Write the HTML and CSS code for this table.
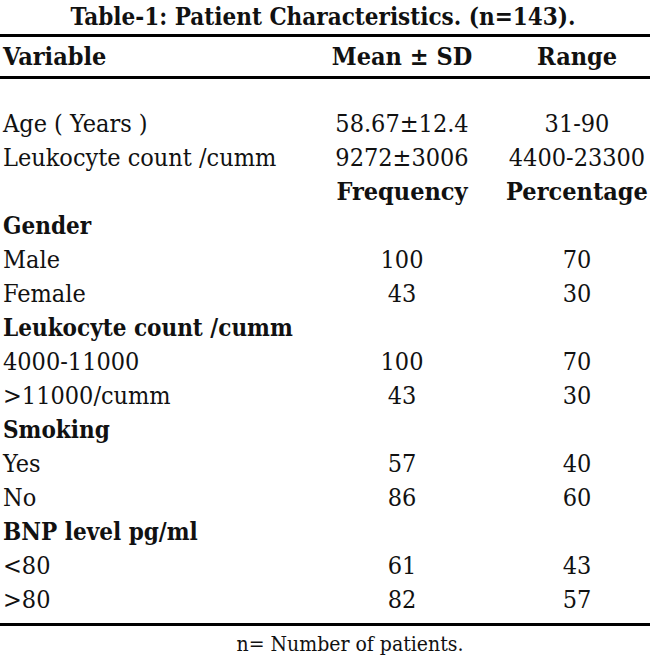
FILE: index.html
```html
<!DOCTYPE html>
<html>
<head>
<meta charset="utf-8">
<link rel="stylesheet" href="styles.css">
</head>
<body>
<div class="sheet">
  <div class="title">Table-1: Patient Characteristics. (n=143).</div>
  <div class="rule"></div>
  <div class="row head">
    <div class="c1">Variable</div><div class="c2">Mean ± SD</div><div class="c3">Range</div>
  </div>
  <div class="rule"></div>
  <div class="body">
    <div class="row"><div class="c1">Age ( Years )</div><div class="c2">58.67±12.4</div><div class="c3">31-90</div></div>
    <div class="row"><div class="c1">Leukocyte count /cumm</div><div class="c2">9272±3006</div><div class="c3">4400-23300</div></div>
    <div class="row sub"><div class="c1"></div><div class="c2">Frequency</div><div class="c3">Percentage</div></div>
    <div class="row bold"><div class="c1">Gender</div><div class="c2"></div><div class="c3"></div></div>
    <div class="row"><div class="c1">Male</div><div class="c2">100</div><div class="c3">70</div></div>
    <div class="row"><div class="c1">Female</div><div class="c2">43</div><div class="c3">30</div></div>
    <div class="row bold"><div class="c1">Leukocyte count /cumm</div><div class="c2"></div><div class="c3"></div></div>
    <div class="row"><div class="c1">4000-11000</div><div class="c2">100</div><div class="c3">70</div></div>
    <div class="row"><div class="c1">&gt;11000/cumm</div><div class="c2">43</div><div class="c3">30</div></div>
    <div class="row bold"><div class="c1">Smoking</div><div class="c2"></div><div class="c3"></div></div>
    <div class="row"><div class="c1">Yes</div><div class="c2">57</div><div class="c3">40</div></div>
    <div class="row"><div class="c1">No</div><div class="c2">86</div><div class="c3">60</div></div>
    <div class="row bold"><div class="c1">BNP level pg/ml</div><div class="c2"></div><div class="c3"></div></div>
    <div class="row"><div class="c1">&lt;80</div><div class="c2">61</div><div class="c3">43</div></div>
    <div class="row"><div class="c1">&gt;80</div><div class="c2">82</div><div class="c3">57</div></div>
  </div>
  <div class="rule bottom"></div>
  <div class="foot">n= Number of patients.</div>
</div>
</body>
</html>
```
FILE: styles.css
```css
html, body { margin: 0; padding: 0; background: #fff; }
.sheet {
  width: 650px;
  font-family: "DejaVu Serif", "Liberation Serif", serif;
  font-stretch: condensed;
  color: #111;
  font-size: 25px;
}
.title {
  height: 34px;
  line-height: 34px;
  text-align: center;
  font-weight: bold;
  font-size: 24px;
  padding-right: 4px;
}
.rule { height: 3px; background: #000; }
.rule.bottom { margin-top: 6px; }
.row {
  display: grid;
  grid-template-columns: 300px 204px 146px;
  height: 34px;
  line-height: 34px;
  white-space: nowrap;
}
.row.head { height: 39px; line-height: 39px; font-weight: bold; }
.body { padding-top: 28px; }
.bold { font-weight: bold; font-size: 24px; }
.sub { font-weight: bold; }
.c1 { padding-left: 3px; }
.c2, .c3 { text-align: center; }
.foot {
  text-align: center;
  font-size: 21px;
  line-height: 36px;
  padding-left: 50px;
}
```
